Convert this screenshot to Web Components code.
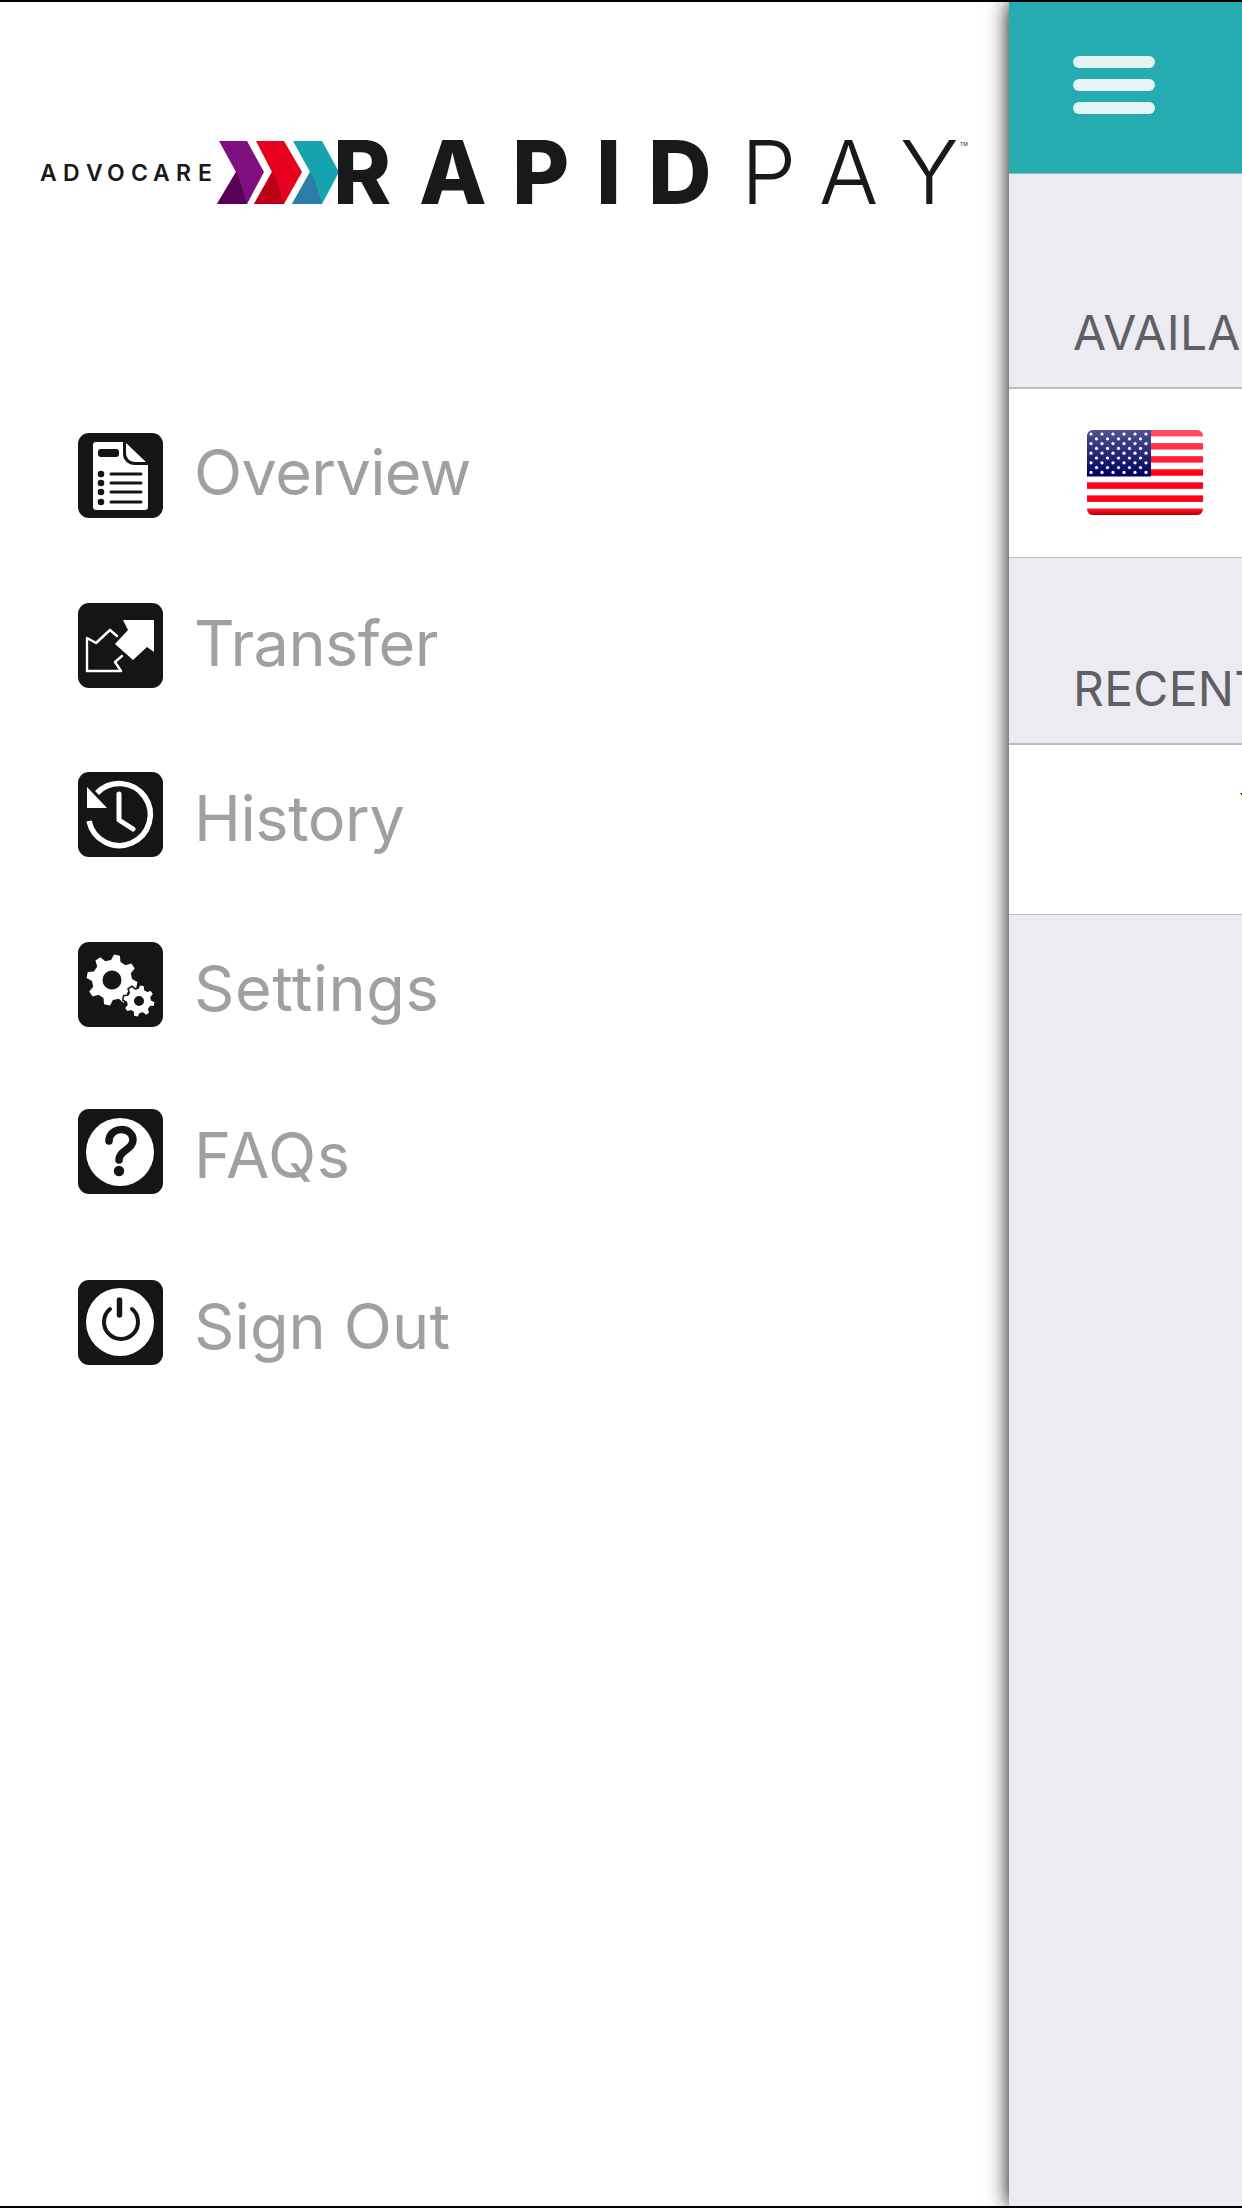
<!DOCTYPE html>
<html lang="en">
<head>
<meta charset="utf-8">
<title>Rapid Pay</title>
<style>
html,body{ margin:0; padding:0; background:#fff; }
</style>
</head>
<body>
<rapid-app>
	<nav-drawer slot="drawer">
		<rapid-logo></rapid-logo>
		<nav-item icon="overview" style="--top:203px;--lift:8px;--ls:-.6px">Overview</nav-item>
		<nav-item icon="transfer" style="--top:85px;--lift:6px;--ls:-.6px">Transfer</nav-item>
		<nav-item icon="history" style="--top:84px;--drop:6px;--ls:-.4px">History</nav-item>
		<nav-item icon="settings" style="--top:85px;--drop:6px;--ls:.5px">Settings</nav-item>
		<nav-item icon="faqs" style="--top:82px;--drop:6px;--ls:.6px">FAQs</nav-item>
		<nav-item icon="signout" style="--top:86px;--drop:6px;--ls:.1px">Sign Out</nav-item>
	</nav-drawer>
	<main-panel slot="panel">
		<section-head style="--h:215px">AVAILA</section-head>
		<section-row><us-flag></us-flag></section-row>
		<section-head style="--h:187px">RECENT</section-head>
		<section-row style="--h:170px"><recent-item>Y</recent-item></section-row>
	</main-panel>
</rapid-app>

<script>
//--フォント--
const FONT_UI = '"Inter","Roboto","Liberation Sans",sans-serif';

//--共通: shadow root に流し込むだけの基底クラス--
class BaseEl extends HTMLElement{
	constructor(){ super();
		this.attachShadow({mode:"open"}).innerHTML = this.constructor.markup;
	}
}

//--画面全体: 上下の黒線, ドロワーとパネルの2カラム--
class RapidApp extends BaseEl{
	static markup = `<style>
		:host{ display:flex; box-sizing:border-box; width:1242px; height:2208px; overflow:hidden;
			border-top:2px solid #000; border-bottom:2px solid #000; background:#fff; font-family:${FONT_UI}; }
		::slotted([slot=drawer]){ flex:0 0 1009px; }
		::slotted([slot=panel]){ flex:0 0 233px; }
	</style><slot name="drawer"></slot><slot name="panel"></slot>`;
}

class NavDrawer extends BaseEl{
	static markup = `<style>
		:host{ display:flex; flex-direction:column; background:#fff; padding-top:128px; }
	</style><slot></slot>`;
}

//--ロゴ: 文字は<text>のまま, x を1文字ずつ指定--
class RapidLogo extends BaseEl{
	static markup = `<style>
		:host{ display:block; height:100px; }
		svg{ display:block; }
		text{ font-family:"Inter","Liberation Sans",sans-serif; fill:#1a1919; }
	</style>
	<svg width="1000" height="100" viewBox="0 130 1000 100">
		<text x="40 63 86 107 131 153 176 198" y="181" font-size="23" font-weight="600">ADVOCARE</text>
		<path fill="#7f0f7e" d="M219 141H247L264 172L247 204H217L236 172Z"/>
		<path fill="#5b0058" d="M217 204L236 172L238 175L247 204Z"/>
		<path fill="#e7001f" d="M256 141H284L302 172L284 204H254L272 172Z"/>
		<path fill="#bb0018" d="M254 204L272 172L275 175L284 204Z"/>
		<path fill="#15a4ad" d="M293 141H322L339 172L322 204H292L310 172Z"/>
		<path fill="#2b7ea6" d="M292 204L310 172L313 175L322 204Z"/>
		<text x="333 419 512 596 648" y="204" font-size="88" font-weight="800">RAPID</text>
		<text x="741 819 900" y="204" font-size="88" font-weight="300">PAY</text>
		<text x="960" y="146" font-size="5" fill="#888">TM</text>
	</svg>`;
}

//--歯車のパスを作る(中心,外径,内径,歯数,穴)--
const gearPath = (cx,cy,R,r,n,hole)=>{
	let d = "";
	for(let i=0;i<n;++i){
		const a = 2*Math.PI*i/n - Math.PI/2 + Math.PI/n/2, w = Math.PI/n;
		const pts = [[r,a-w*.62],[R,a-w*.3],[R,a+w*.3],[r,a+w*.62]];
		for(const [m,t] of pts){
			d += `${d?"L":"M"}${(cx+m*Math.cos(t)).toFixed(2)} ${(cy+m*Math.sin(t)).toFixed(2)}`;
		}
	}
	d += `Z M${cx-hole} ${cy}a${hole} ${hole} 0 1 0 ${hole*2} 0a${hole} ${hole} 0 1 0 ${-hole*2} 0Z`;
	return d;
};

//--メニューアイコン(85x85)--
const ICONS = {
	overview:`<path fill="#fff" d="M18 9H45V21C45 27 50 32 57 32H70V74Q70 77 67 77H18Q15 77 15 74V12Q15 9 18 9Z"/>
		<path fill="#fff" d="M48 10L68 29H57C52 29 48 25 48 20Z"/>
		<rect x="20" y="16" width="21" height="8" rx="3" fill="#151515"/>
		<g fill="#151515"><circle cx="23" cy="41" r="3.3"/><circle cx="23" cy="50" r="3.3"/><circle cx="23" cy="59" r="3.3"/><circle cx="23" cy="69" r="3.3"/></g>
		<g stroke="#151515" stroke-width="3" stroke-linecap="round"><path d="M33 41H63M33 50H63M33 59H63M33 69H63"/></g>`,
	transfer:`<path fill="#fff" d="M45 17H76V49L69 44L55 57L37 41L50 27Z"/>
		<path fill="none" stroke="#fff" stroke-width="2.4" stroke-linejoin="round" stroke-linecap="round" d="M39 33L32 27L18 40L9 35V68H43L37 59L44 53"/>`,
	history:`<path fill="none" stroke="#fff" stroke-width="5.5" d="M19 21A31 31 0 1 1 11 49"/>
		<path fill="#fff" d="M9 15V36H29Z"/>
		<path fill="none" stroke="#fff" stroke-width="5" stroke-linecap="round" stroke-linejoin="round" d="M41 22V48L55 57"/>`,
	settings:`<path fill="#fff" fill-rule="evenodd" d="${gearPath(34,38,25.5,20,8,9.5)}"/>
		<path fill="#fff" stroke="#151515" stroke-width="3" paint-order="stroke" fill-rule="evenodd" d="${gearPath(61,59,15.5,12,8,5)}"/>`,
	faqs:`<circle cx="42" cy="43" r="34" fill="#fff"/>
		<path fill="none" stroke="#151515" stroke-width="7.5" stroke-linecap="round" d="M31 32C31 17 55 17 55 31C55 41 41 41 41 51"/>
		<circle cx="41" cy="62" r="5.2" fill="#151515"/>`,
	signout:`<circle cx="42" cy="42" r="34" fill="#fff"/>
		<path fill="none" stroke="#151515" stroke-width="4" stroke-linecap="round" d="M32 29A17 17 0 1 0 54 29"/>
		<path fill="none" stroke="#151515" stroke-width="5.5" stroke-linecap="round" d="M41.5 20V35"/>`
};

//--メニュー行: 文字の上下は行ごとに少しずれている(--lift/--drop)--
class NavItem extends BaseEl{
	static markup = `<style>
		:host{ display:flex; align-items:center; gap:31px; margin:var(--top,85px) 0 0 78px;
			height:85px; color:#a0a0a0; font-size:63px; letter-spacing:var(--ls,-.5px); white-space:nowrap; }
		svg{ display:block; flex:none; border-radius:11px; background:#151515; }
		span{ padding:var(--drop,0) 0 var(--lift,0); }
	</style><svg width="85" height="85" viewBox="0 0 85 85"></svg><span><slot></slot></span>`;
	connectedCallback(){
		this.shadowRoot.querySelector("svg").innerHTML = ICONS[this.getAttribute("icon")] || "";
	}
}

//--右側パネル: 影はここに付ける--
class MainPanel extends BaseEl{
	static markup = `<style>
		:host{ display:flex; flex-direction:column; background:#ebebf1; box-shadow:0 0 20px #000; position:relative; }
		header{ height:117px; background:#26abb0; border-bottom:1px solid #a3b0b3; display:flex; flex-direction:column;
			gap:11.5px; padding:54px 0 0 64px; }
		header i{ display:block; width:82px; height:11.5px; border-radius:6px; background:#e3f5f5; }
	</style><header><i></i><i></i><i></i></header><slot></slot>`;
}

class SectionHead extends BaseEl{
	static markup = `<style>
		:host{ display:flex; align-items:flex-end; box-sizing:border-box; height:var(--h,185px); padding:0 0 26px 64px;
			overflow:hidden; color:#5f5f64; font-size:48px; line-height:56px; white-space:nowrap; letter-spacing:.3px;
			border-bottom:2px solid #bcbcc2; }
	</style><slot></slot>`;
}

class SectionRow extends BaseEl{
	static markup = `<style>
		:host{ display:flex; align-items:center; box-sizing:border-box; height:var(--h,169px); background:#fff;
			overflow:hidden; border-bottom:1.5px solid #c0c0c6; }
	</style><slot></slot>`;
}

//--最近の項目: 右端でほとんど切れている--
class RecentItem extends BaseEl{
	static markup = `<style>
		:host{ display:block; margin:0 0 38px 230px; color:#111; font-size:48px; line-height:56px; }
	</style><slot></slot>`;
}

//--星条旗: SVGをその場で作る--
class UsFlag extends BaseEl{
	static markup = `<style>
		:host{ display:block; margin:0 0 2px 78px; width:116px; height:85px; flex:none; }
		svg{ display:block; }
	</style><svg width="116" height="85" viewBox="0 0 116 85"></svg>`;
	connectedCallback(){
		const h = 85/13;
		let stripes = "";
		for(let i=0;i<13;++i){
			stripes += `<rect y="${(i*h).toFixed(2)}" width="116" height="${(h+.2).toFixed(2)}" fill="${i&1?"#fff":"#ff0018"}"/>`;
		}
		let stars = "";
		for(let r=0;r<9;++r){
			const n = r&1 ? 5 : 6;
			for(let c=0;c<n;++c){
				stars += `<circle cx="${4+(r&1?5.5:0)+c*11}" cy="${4+r*4.8}" r="1.6"/>`;
			}
		}
		this.shadowRoot.querySelector("svg").innerHTML = `
		<defs>
			<clipPath id="fc"><rect width="116" height="85" rx="6"/></clipPath>
			<linearGradient id="gloss" x1="0" y1="0" x2="0" y2="1">
				<stop offset="0" stop-color="#fff" stop-opacity=".32"/>
				<stop offset=".48" stop-color="#fff" stop-opacity=".04"/>
				<stop offset=".5" stop-color="#fff" stop-opacity="0"/>
				<stop offset=".86" stop-color="#9ff" stop-opacity="0"/>
				<stop offset=".93" stop-color="#9ff" stop-opacity=".18"/>
				<stop offset=".96" stop-color="#800" stop-opacity=".1"/>
				<stop offset="1" stop-color="#800" stop-opacity=".7"/>
			</linearGradient>
			<filter id="soft" x="0" y="0" width="1" height="1"><feGaussianBlur stdDeviation=".45"/></filter>
		</defs>
		<g clip-path="url(#fc)">
			<g filter="url(#soft)">
				${stripes}
				<rect width="64" height="46.5" fill="#04045f"/>
				<g fill="#fff">${stars}</g>
			</g>
			<rect width="116" height="85" fill="url(#gloss)"/>
		</g>`;
	}
}

customElements.define("rapid-app",RapidApp);
customElements.define("nav-drawer",NavDrawer);
customElements.define("rapid-logo",RapidLogo);
customElements.define("nav-item",NavItem);
customElements.define("main-panel",MainPanel);
customElements.define("section-head",SectionHead);
customElements.define("section-row",SectionRow);
customElements.define("recent-item",RecentItem);
customElements.define("us-flag",UsFlag);
</script>
</body>
</html>
